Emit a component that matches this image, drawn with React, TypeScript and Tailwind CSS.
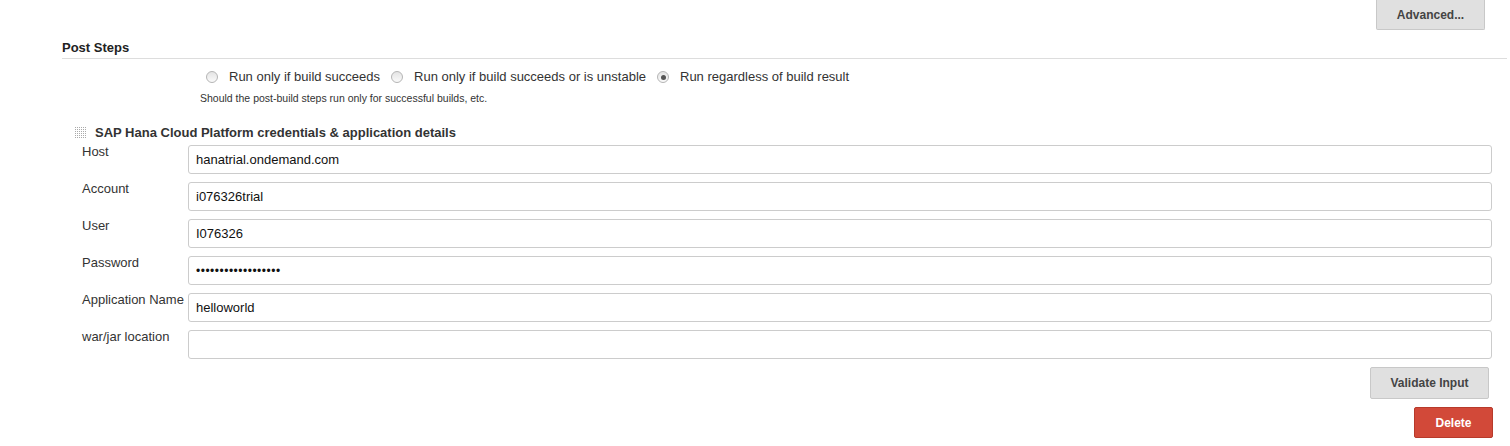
import React from 'react';

const font = { fontFamily: '"Liberation Sans", Arial, sans-serif' };

function Radio({ checked, label }: { checked?: boolean; label: string }) {
  return (
    <label className="flex items-center mr-[11px]">
      <span className="w-[12px] h-[12px] rounded-full border border-[#b5b5b5] bg-gradient-to-b from-[#e4e4e4] to-[#fafafa] flex items-center justify-center mr-[11px]">
        {checked && <span className="w-[5px] h-[5px] rounded-full bg-[#555]" />}
      </span>
      <span className="text-[13px] text-[#333]">{label}</span>
    </label>
  );
}

function DragHandle() {
  const dots = [];
  for (let r = 0; r < 6; r++) {
    for (let c = 0; c < 6; c++) {
      dots.push(<rect key={`${r}-${c}`} x={c * 2} y={r * 2} width="1" height="1" fill="#aaa" />);
    }
  }
  return (
    <svg width="12" height="12" viewBox="0 0 12 12" className="mr-[8px]">
      {dots}
    </svg>
  );
}

const fields = [
  { label: 'Host', value: 'hanatrial.ondemand.com' },
  { label: 'Account', value: 'i076326trial' },
  { label: 'User', value: 'I076326' },
  { label: 'Password', value: '••••••••••••••••••', password: true },
  { label: 'Application Name', value: 'helloworld' },
  { label: 'war/jar location', value: '' },
];

export default function App() {
  return (
    <div className="w-[1510px] h-[446px] bg-white text-[#333] overflow-hidden" style={font}>
      {/* Advanced */}
      <div className="flex justify-end pr-[25px]">
        <button className="w-[109px] h-[30px] bg-[#e0e0e0] border-x border-b border-[#c8c8c8] rounded-b-[2px] text-[12px] font-bold text-[#444]">
          Advanced...
        </button>
      </div>

      {/* Post Steps */}
      <div className="ml-[62px] mr-[3px] mt-[10px] border-b border-[#ddd] pb-[2px]">
        <h3 className="text-[13px] font-bold leading-[16px] text-[#222]">Post Steps</h3>
      </div>

      <div className="ml-[206px] mt-[9px] flex items-center h-[18px]">
        <Radio label="Run only if build succeeds" />
        <Radio label="Run only if build succeeds or is unstable" />
        <Radio checked label="Run regardless of build result" />
      </div>
      <div className="ml-[200px] mt-[6px] text-[10.5px] leading-[12px] text-[#333]">
        Should the post-build steps run only for successful builds, etc.
      </div>

      {/* Credentials section */}
      <div className="ml-[75px] mt-[21px] flex items-center h-[16px]">
        <DragHandle />
        <span className="text-[13px] font-bold text-[#333]">
          SAP Hana Cloud Platform credentials &amp; application details
        </span>
      </div>

      <div className="mt-[4px] mr-[18px] flex flex-col gap-[8px]">
        {fields.map(f => (
          <div key={f.label} className="flex">
            <div className="w-[188px] pl-[82px] text-[13px] leading-[14px] text-[#333] whitespace-nowrap">
              {f.label}
            </div>
            <div className="flex-1 h-[29px] border border-[#ccc] rounded-[3px] flex items-center px-[7px] text-[13px] text-[#111]">
              {f.password ? <span className="text-[12px] tracking-[0.5px]">{f.value}</span> : f.value}
            </div>
          </div>
        ))}
      </div>

      <div className="flex flex-col items-end mt-[8px]">
        <button className="mr-[21px] w-[119px] h-[32px] bg-[#e0e0e0] border border-[#c8c8c8] rounded-[2px] text-[12px] font-bold text-[#444]">
          Validate Input
        </button>
        <button className="mr-[17px] mt-[8px] w-[79px] h-[31px] bg-[#d24939] border border-[#b73a2b] rounded-[2px] text-[12px] font-bold text-white">
          Delete
        </button>
      </div>
    </div>
  );
}
